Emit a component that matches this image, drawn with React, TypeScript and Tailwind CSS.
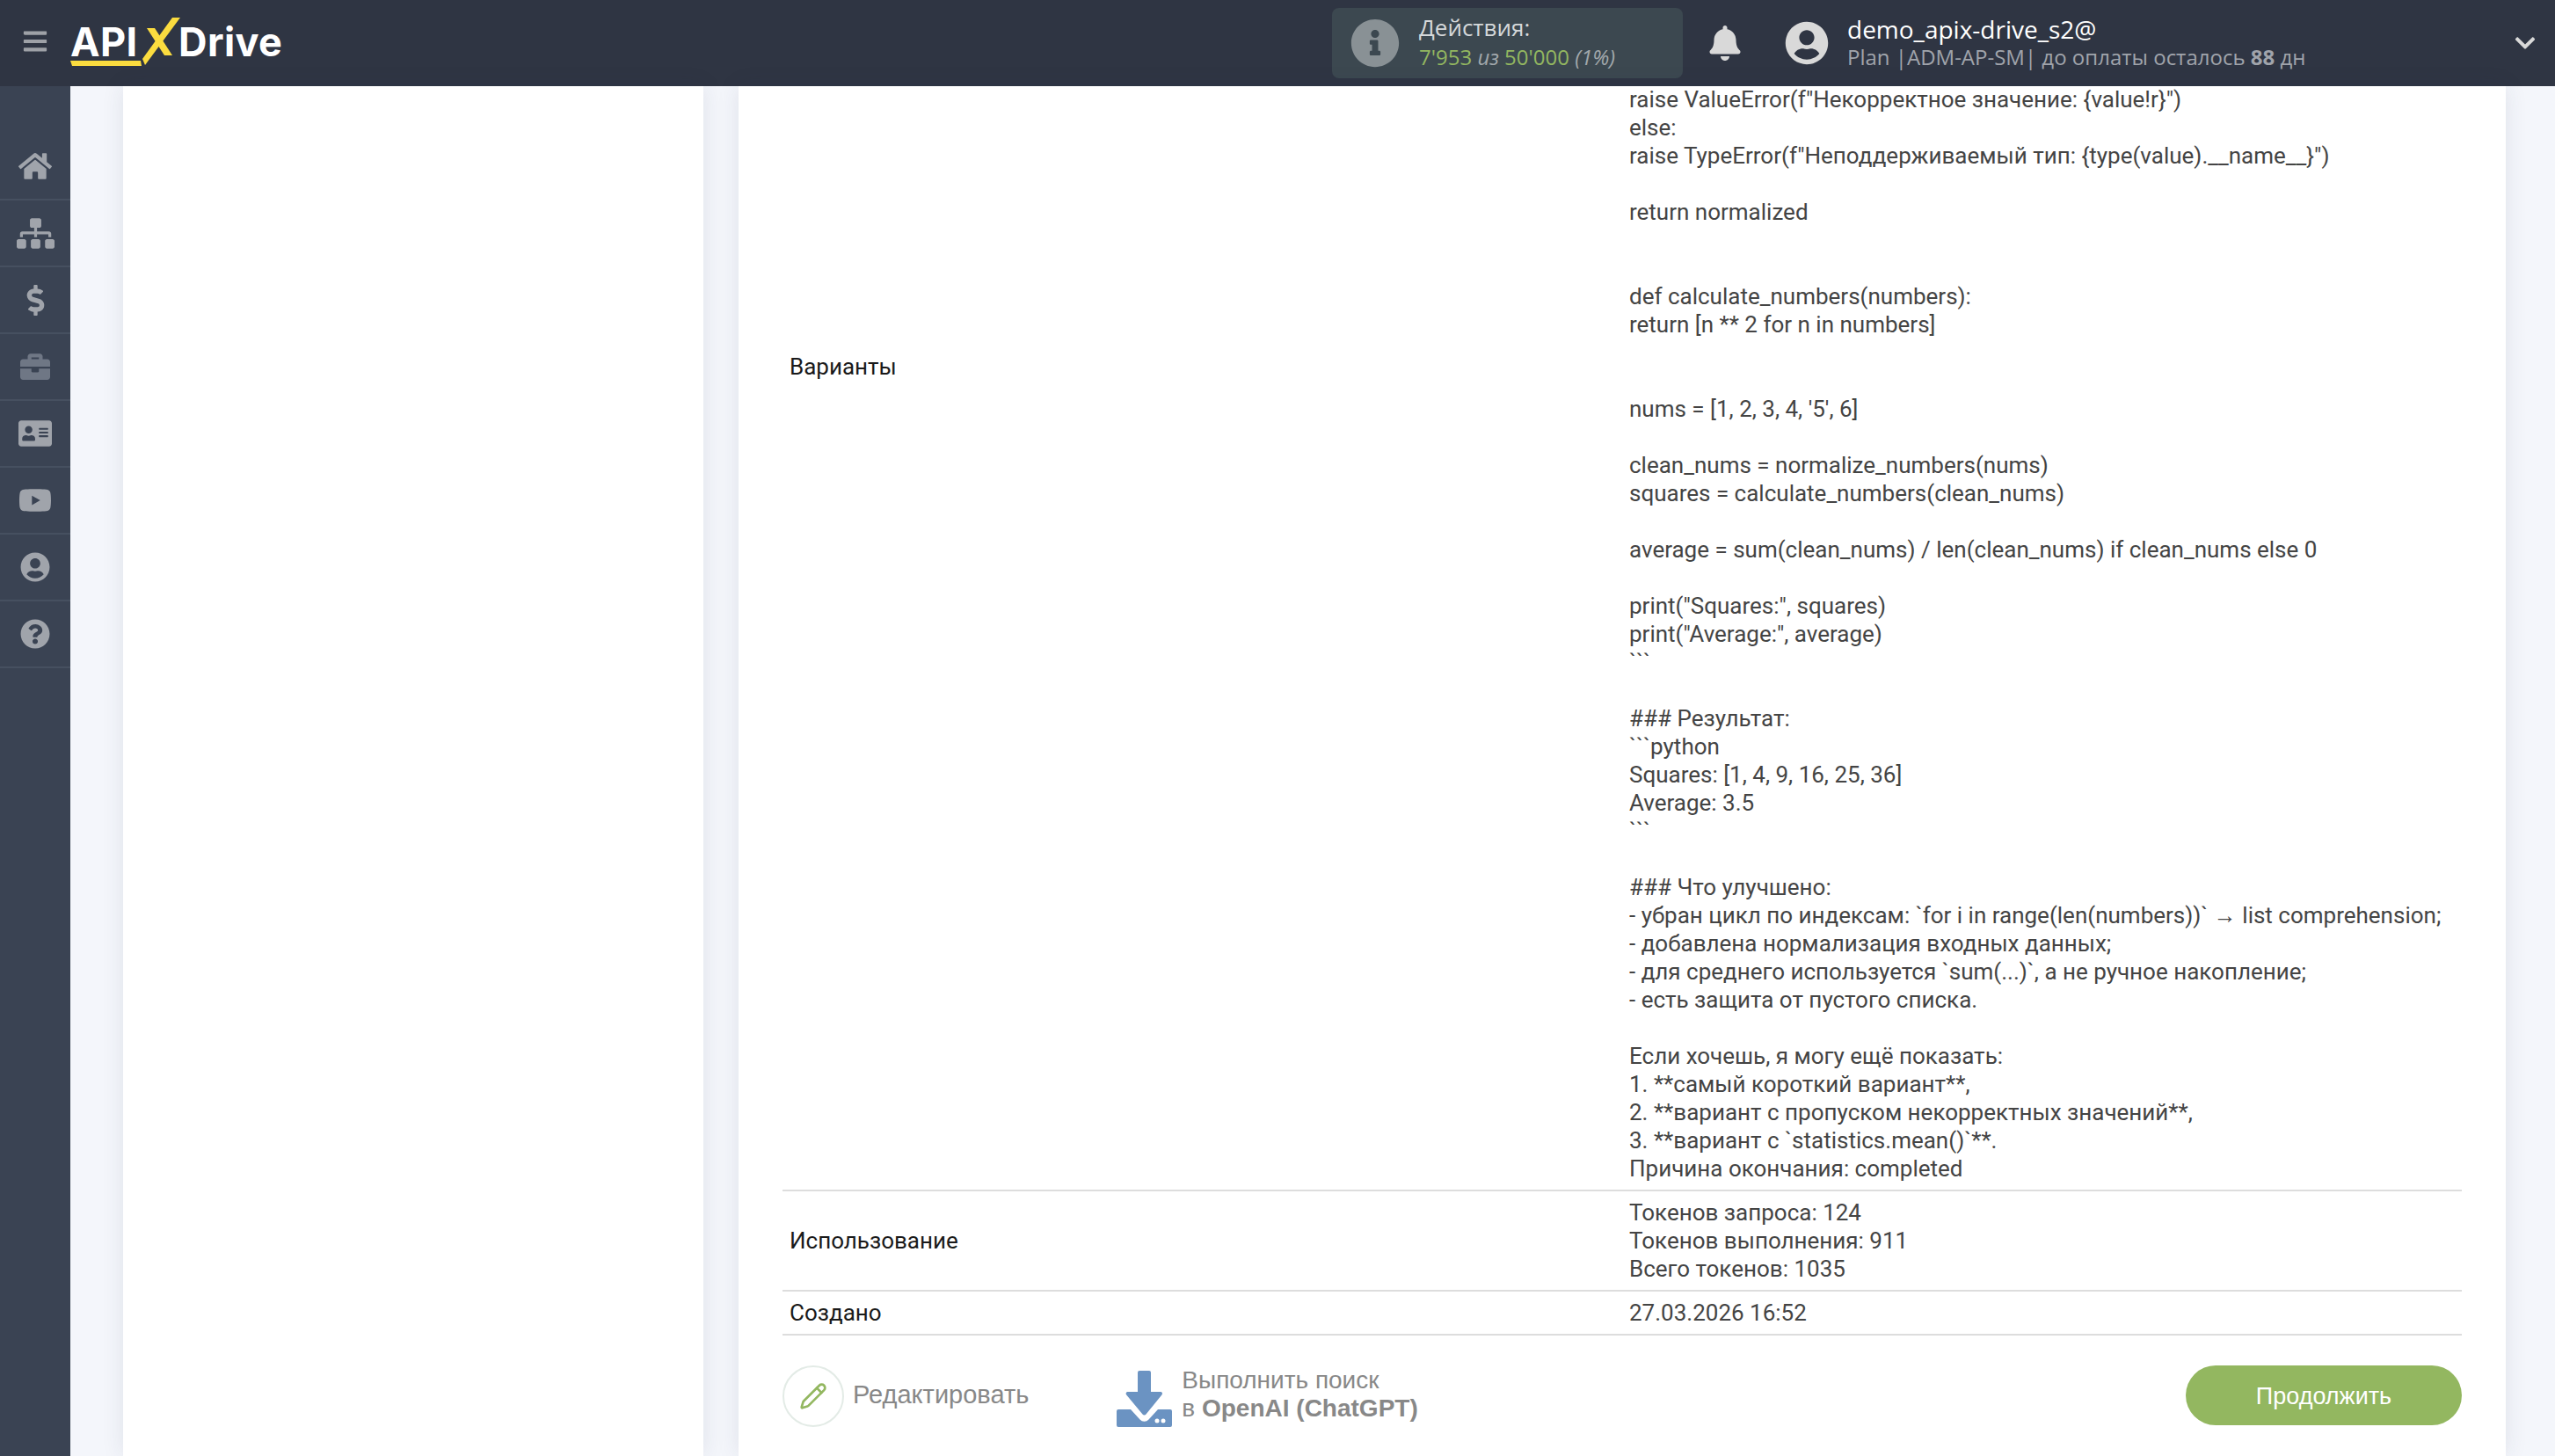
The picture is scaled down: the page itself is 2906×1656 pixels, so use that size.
import React from "react";
import {
  FaAddressCard,
  FaBars,
  FaBell,
  FaBriefcase,
  FaChevronDown,
  FaDollarSign,
  FaHome,
  FaInfoCircle,
  FaQuestionCircle,
  FaSitemap,
  FaUserCircle,
  FaYoutube,
} from "react-icons/fa";
import { Pencil } from "lucide-react";

const output = `raise ValueError(f"Некорректное значение: {value!r}")
else:
raise TypeError(f"Неподдерживаемый тип: {type(value).__name__}")

return normalized


def calculate_numbers(numbers):
return [n ** 2 for n in numbers]


nums = [1, 2, 3, 4, '5', 6]

clean_nums = normalize_numbers(nums)
squares = calculate_numbers(clean_nums)

average = sum(clean_nums) / len(clean_nums) if clean_nums else 0

print("Squares:", squares)
print("Average:", average)
\`\`\`

### Результат:
\`\`\`python
Squares: [1, 4, 9, 16, 25, 36]
Average: 3.5
\`\`\`

### Что улучшено:
- убран цикл по индексам: \`for i in range(len(numbers))\` → list comprehension;
- добавлена нормализация входных данных;
- для среднего используется \`sum(...)\`, а не ручное накопление;
- есть защита от пустого списка.

Если хочешь, я могу ещё показать:
1. **самый короткий вариант**,
2. **вариант с пропуском некорректных значений**,
3. **вариант с \`statistics.mean()\`**.
Причина окончания: completed`;

const menu = [
  { icon: FaHome, size: 38, dim: false },
  { icon: FaSitemap, size: 43, dim: false },
  { icon: FaDollarSign, size: 35, dim: false },
  { icon: FaBriefcase, size: 34, dim: true },
  { icon: FaAddressCard, size: 38, dim: false },
  { icon: FaYoutube, size: 38, dim: false },
  { icon: FaUserCircle, size: 34, dim: false },
  { icon: FaQuestionCircle, size: 34, dim: false },
];

const Logo = () => (
  <div className="relative -mt-[4px] ml-[25px] flex h-[56px] w-[242px] items-center text-white font-['Inter',sans-serif] text-[45px] font-bold leading-none tracking-[0.4px]">
    <span className="w-[83px]">API</span>
    <svg width="44" height="55" viewBox="0 0 44 55" className="-ml-px shrink-0">
      <polygon points="34,0 43,0 3,54 0,47" fill="#fbdc3f" />
      <polygon points="5,12 14,12 34,43 25,43" fill="#fbdc3f" />
    </svg>
    <span className="-ml-[3px]">Drive</span>
    <svg width="82" height="6" viewBox="0 0 82 6" className="absolute left-0 top-[50px]">
      <polygon points="0,0 80,0 81,6 2,6" fill="#fbdc3f" />
    </svg>
  </div>
);

const Header = () => (
  <header className="flex h-[98px] shrink-0 items-center bg-[#2f3543] font-['Open_Sans',sans-serif]">
    <FaBars className="ml-[25px] -mt-[4px] text-[#9ea1a7]" size={30} />
    <Logo />
    <div className="ml-[1193px] flex h-[80px] w-[399px] items-center rounded-lg bg-[#3c4850] pl-[21px]">
      <FaInfoCircle className="text-[#899195]" size={56} />
      <div className="ml-[22px] -mt-[2px] text-[26px] leading-[33px]">
        <div className="text-[#d5d8da]">Действия:</div>
        <div className="text-[24px] text-[#93b760]">
          7'953 <i className="text-[#a2a8ac]">из</i> 50'000{" "}
          <i className="text-[#a2a8ac]">(1%)</i>
        </div>
      </div>
    </div>
    <FaBell className="ml-[28px] text-[#d9d9d9]" size={40} />
    <FaUserCircle className="ml-[48px] text-[#d9d9d9]" size={50} />
    <div className="ml-[21px] -mt-[2px] flex-1">
      <div className="text-[28px] leading-[34px] text-white">demo_apix-drive_s2@</div>
      <div className="text-[24px] leading-[30px] text-[#a0a4ab]">
        Plan |ADM-AP-SM| до оплаты осталось <b>88</b> дн
      </div>
    </div>
    <FaChevronDown className="mr-[21px] text-[#d9d9d9]" size={26} />
  </header>
);

const Sidebar = () => (
  <aside className="w-[80px] shrink-0 bg-[#3a4353] pt-[54px]">
    {menu.map((item, i) => {
      const Icon = item.icon;
      return (
        <div
          key={i}
          className={`flex h-[76px] items-center justify-center border-b-2 border-[#465060] ${
            item.dim ? "text-[#6f7785]" : "text-[#a0a4ab]"
          }`}
        >
          <Icon size={item.size} />
        </div>
      );
    })}
  </aside>
);

const DownloadIcon = () => (
  <svg width="63" height="64" viewBox="0 0 63 64" className="shrink-0">
    <path
      d="M26 0h11a2 2 0 0 1 2 2v22h11a2 2 0 0 1 1.6 3.2L33.5 49.5a2.6 2.6 0 0 1-4 0L11 27.2A2 2 0 0 1 12.5 24H24V2a2 2 0 0 1 2-2z"
      fill="#6b93c2"
    />
    <path
      d="M2 44h14l10.5 11.5a6.6 6.6 0 0 0 10 0L47 44h14a2 2 0 0 1 2 2v16a2 2 0 0 1-2 2H2a2 2 0 0 1-2-2V46a2 2 0 0 1 2-2z"
      fill="#6b93c2"
    />
    <circle cx="46" cy="57" r="2.5" fill="#fff" />
    <circle cx="53" cy="57" r="2.5" fill="#fff" />
  </svg>
);

export default function App() {
  return (
    <div className="flex h-[1656px] w-[2906px] flex-col overflow-hidden bg-[#f4f6fb]">
      <Header />
      <div className="flex min-h-0 flex-1">
        <Sidebar />
        <div className="ml-[60px] w-[660px] shrink-0 bg-white shadow-[0_0_24px_rgba(40,50,80,0.10)]" />
        <main className="ml-[40px] w-[2010px] shrink-0 bg-white pl-[50px] pr-[50px] shadow-[0_0_24px_rgba(40,50,80,0.10)] font-['Roboto',sans-serif] text-[26px] leading-[32px]">
          <div className="-mt-px grid grid-cols-2 border-b-2 border-[#dddddd] pb-2">
            <div className="pl-[8px] pt-[304px] text-[#1a1a1a]">Варианты</div>
            <div className="whitespace-pre-line pl-[8px] text-[#444444]">{output}</div>
          </div>
          <div className="grid grid-cols-2 items-center border-b-2 border-[#dddddd] py-2">
            <div className="pl-[8px] text-[#1a1a1a]">Использование</div>
            <div className="pl-[8px] text-[#444444]">
              <div>Токенов запроса: 124</div>
              <div>Токенов выполнения: 911</div>
              <div>Всего токенов: 1035</div>
            </div>
          </div>
          <div className="grid grid-cols-2 items-center border-b-2 border-[#dddddd] py-2">
            <div className="pl-[8px] text-[#1a1a1a]">Создано</div>
            <div className="pl-[8px] text-[#444444]">27.03.2026 16:52</div>
          </div>
          <div className="flex items-start pt-[34px] font-['Liberation_Sans',sans-serif] text-[#888888]">
            <div className="flex h-[70px] w-[70px] items-center justify-center rounded-full border-2 border-[#e3ebe6]">
              <Pencil className="text-[#93b760]" size={32} strokeWidth={2} />
            </div>
            <span className="ml-[10px] mt-[17px] text-[29px]">Редактировать</span>
            <div className="ml-[100px] mt-[6px] flex items-center">
              <DownloadIcon />
              <div className="ml-[11px] -mt-[11px] text-[28px] leading-[32px]">
                <div>Выполнить поиск</div>
                <div>
                  в <b>OpenAI (ChatGPT)</b>
                </div>
              </div>
            </div>
            <button className="ml-auto h-[68px] w-[314px] rounded-[34px] bg-[#93b760] pt-[2px] text-[27px] text-white">
              Продолжить
            </button>
          </div>
        </main>
      </div>
    </div>
  );
}
